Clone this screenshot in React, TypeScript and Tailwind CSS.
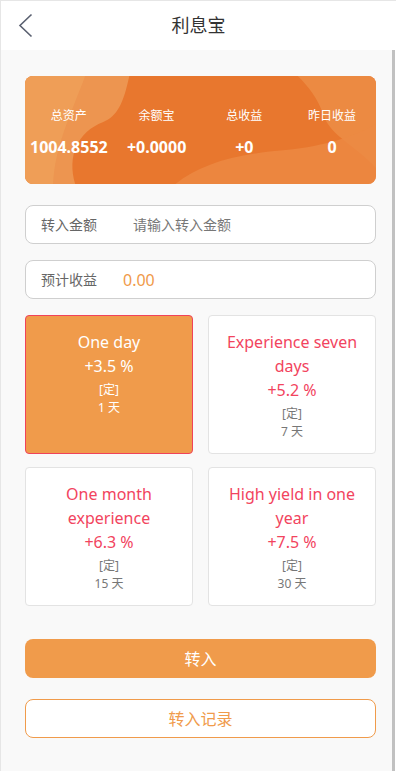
import { useState } from 'react';

interface Plan {
  id: string;
  title: string;
  rate: string;
  days: number;
}

const plans: Plan[] = [
  { id: 'd1', title: 'One day', rate: '+3.5 %', days: 1 },
  { id: 'd7', title: 'Experience seven days', rate: '+5.2 %', days: 7 },
  { id: 'd15', title: 'One month experience', rate: '+6.3 %', days: 15 },
  { id: 'd30', title: 'High yield in one year', rate: '+7.5 %', days: 30 },
];

const stats = [
  { label: '总资产', value: '1004.8552' },
  { label: '余额宝', value: '+0.0000' },
  { label: '总收益', value: '+0' },
  { label: '昨日收益', value: '0' },
];

const font = { fontFamily: '"Noto Sans", "Noto Sans CJK SC", sans-serif' };

function BackIcon() {
  return (
    <svg width="16" height="26" viewBox="0 0 16 26" fill="none">
      <path d="M13.5 1.5 L2 12.5 L13.5 23.5" stroke="#5a6070" strokeWidth="1.6" />
    </svg>
  );
}

function CardWaves() {
  return (
    <svg className="absolute inset-0 h-full w-full" viewBox="0 0 350 108" preserveAspectRatio="none">
      <rect width="350" height="108" fill="#e8772e" />
      <path d="M0 0 H104 C98 28 92 40 78 46 C52 56 42 80 50 108 H0 Z" fill="#ed9550" />
      <path d="M0 0 H60 C45 40 30 70 28 108 H0 Z" fill="#f0a35a" opacity="0.7" />
      <path d="M272 0 H350 V92 C330 70 305 60 298 40 C292 22 282 10 272 0 Z" fill="#ec8a42" />
      <path d="M150 108 C175 88 210 78 260 74 C300 70 330 60 350 48 V108 Z" fill="#ec8a44" opacity="0.8" />
    </svg>
  );
}

export default function App() {
  const [selected, setSelected] = useState('d1');
  const [amount, setAmount] = useState('');

  return (
    <div className="flex min-h-[771px] w-[396px] flex-col border-t border-l border-[#e6e6e6] bg-white" style={font}>
      <header className="relative flex h-[49px] items-center justify-center bg-white">
        <button className="absolute left-[17px] top-[12px]">
          <BackIcon />
        </button>
        <h1 className="text-[18px] text-[#333]">利息宝</h1>
      </header>

      <div className="flex flex-1">
        <main className="flex flex-1 flex-col bg-[#f9f9f9] pl-[24px] pr-[16px] pt-[26px] pb-[32px]">
          <section className="relative h-[108px] overflow-hidden rounded-[8px]">
            <CardWaves />
            <div className="relative grid h-full grid-cols-4 pt-[31px]">
              {stats.map((s) => (
                <div key={s.label} className="flex flex-col items-center text-white">
                  <span className="text-[12px] leading-[18px]">{s.label}</span>
                  <span className="mt-[12px] text-[16px] font-bold leading-[20px]">{s.value}</span>
                </div>
              ))}
            </div>
          </section>

          <label className="mt-[21px] flex h-[39px] items-center rounded-[8px] border border-[#cfcfcf] bg-white px-[15px]">
            <span className="w-[92px] shrink-0 text-[14px] text-[#666]">转入金额</span>
            <input
              value={amount}
              onChange={(e) => setAmount(e.target.value)}
              placeholder="请输入转入金额"
              className="min-w-0 flex-1 bg-transparent text-[14px] text-[#333] outline-none placeholder:text-[#777]"
            />
          </label>

          <div className="mt-[16px] flex h-[39px] items-center rounded-[8px] border border-[#cfcfcf] bg-white px-[15px]">
            <span className="w-[82px] shrink-0 text-[14px] text-[#666]">预计收益</span>
            <span className="text-[16px] text-[#f09a4a]">0.00</span>
          </div>

          <div className="mt-[16px] grid grid-cols-2 gap-x-[15px] gap-y-[13px]">
            {plans.map((p) => {
              const active = p.id === selected;
              return (
                <button
                  key={p.id}
                  onClick={() => setSelected(p.id)}
                  className={
                    active
                      ? 'flex flex-col items-center rounded-[4px] border border-[#f0435a] bg-[#f09b4b] px-[10px] pt-[14px] pb-[12px] text-center text-white'
                      : 'flex flex-col items-center rounded-[4px] border border-[#e3e3e3] bg-white px-[10px] pt-[14px] pb-[12px] text-center text-[#f2445e]'
                  }
                >
                  <span className="text-[16px] leading-[24px]">{p.title}</span>
                  <span className="text-[16px] leading-[24px]">{p.rate}</span>
                  <span className={active ? 'mt-[3px] text-[12px] leading-[18px] text-white' : 'mt-[3px] text-[12px] leading-[18px] text-[#777]'}>
                    [定]
                  </span>
                  <span className={active ? 'text-[12px] leading-[18px] text-white' : 'text-[12px] leading-[18px] text-[#777]'}>
                    {p.days} 天
                  </span>
                </button>
              );
            })}
          </div>

          <button className="mt-[33px] h-[39px] rounded-[8px] bg-[#f09b4b] text-[16px] text-white">转入</button>
          <button className="mt-[21px] h-[39px] rounded-[8px] border border-[#f09b4b] bg-white text-[16px] text-[#f09b4b]">
            转入记录
          </button>
        </main>
        <div className="w-[3px] bg-[#c1c1c1]" />
        <div className="w-[1px] bg-white" />
      </div>
    </div>
  );
}
